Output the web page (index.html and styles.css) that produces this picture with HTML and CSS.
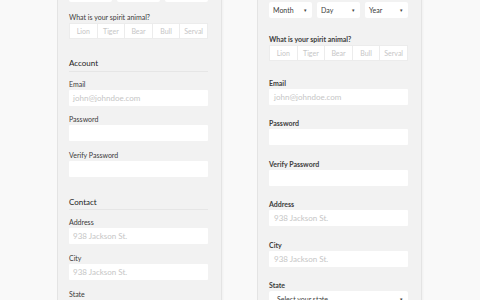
FILE: index.html
```html
<!DOCTYPE html>
<html lang="en">
<head>
  <meta charset="UTF-8" />
  <title>Signup form</title>
  <link rel="stylesheet" href="styles.css">
</head>
<body>

  <div class="screens">

    <!-- Versão compacta -->
    <section class="panel panel-compact">
      <!-- selects de data (cortados no topo) -->
      <div class="date-row">
        <div class="select"></div>
        <div class="select"></div>
        <div class="select"></div>
      </div>

      <div class="field field-animal">
        <label>What is your spirit animal?</label>
        <div class="btn-group">
          <span>Lion</span><span>Tiger</span><span>Bear</span><span>Bull</span><span>Serval</span>
        </div>
      </div>

      <h3 class="section-title">Account</h3>
      <div class="field">
        <label>Email</label>
        <div class="input placeholder">john@johndoe.com</div>
      </div>
      <div class="field">
        <label>Password</label>
        <div class="input"></div>
      </div>
      <div class="field">
        <label>Verify Password</label>
        <div class="input"></div>
      </div>

      <h3 class="section-title">Contact</h3>
      <div class="field">
        <label>Address</label>
        <div class="input placeholder">938 Jackson St.</div>
      </div>
      <div class="field">
        <label>City</label>
        <div class="input placeholder">938 Jackson St.</div>
      </div>
      <div class="field">
        <label>State</label>
        <div class="select"></div>
      </div>
    </section>

    <!-- Versão espaçada -->
    <section class="panel panel-wide">
      <div class="date-row">
        <div class="select">Month <span class="caret">&#9662;</span></div>
        <div class="select">Day <span class="caret">&#9662;</span></div>
        <div class="select">Year <span class="caret">&#9662;</span></div>
      </div>

      <div class="field field-animal">
        <label>What is your spirit animal?</label>
        <div class="btn-group">
          <span>Lion</span><span>Tiger</span><span>Bear</span><span>Bull</span><span>Serval</span>
        </div>
      </div>

      <div class="field">
        <label>Email</label>
        <div class="input placeholder">john@johndoe.com</div>
      </div>
      <div class="field">
        <label>Password</label>
        <div class="input"></div>
      </div>
      <div class="field">
        <label>Verify Password</label>
        <div class="input"></div>
      </div>
      <div class="field">
        <label>Address</label>
        <div class="input placeholder">938 Jackson St.</div>
      </div>
      <div class="field">
        <label>City</label>
        <div class="input placeholder">938 Jackson St.</div>
      </div>
      <div class="field">
        <label>State</label>
        <div class="select">Select your state <span class="caret">&#9662;</span></div>
      </div>
    </section>

  </div>

</body>
</html>
```

FILE: styles.css
```css
:root {
  --color-page: #f9f9f9;
  --color-panel: #f2f2f2;
  --color-border: #e4e4e4;
  --color-text: #3a3a3a;
  --color-muted: #c6c6c6;
  --color-light: #ffffff;
}

* {
  box-sizing: border-box;
  margin: 0;
  padding: 0;
}
body {
  background: var(--color-page);
  font-family: 'Lato', 'Open Sans', sans-serif;
  color: var(--color-text);
  height: 300px;
  overflow: hidden;
}

.screens {
  display: flex;
  gap: 35px;
  padding-left: 57px;
  align-items: flex-start;
}

/* Painel */
.panel {
  width: 165px;
  background: var(--color-panel);
  border: 1px solid var(--color-border);
  box-shadow: 1px 0 2px rgba(0,0,0,0.04);
  padding: 0 13px 40px 11px;
}
.panel-compact {
  margin-top: -15px;
}
.panel-wide {
  margin-top: -1px;
  padding-top: 2px;
}

label {
  display: block;
  font-size: 7px;
  line-height: 10px;
  margin-bottom: 1px;
}

/* Selects falsos */
.date-row {
  display: flex;
  gap: 5px;
}
.date-row .select {
  flex: 1;
}
.select {
  height: 16px;
  background: var(--color-light);
  border-radius: 2px;
  font-size: 7px;
  line-height: 16px;
  padding: 0 5px 0 4px;
  display: flex;
  justify-content: space-between;
  align-items: center;
}
.caret {
  font-size: 5px;
  color: #444;
}

/* Grupo de botões */
.btn-group {
  display: flex;
  height: 16px;
  background: var(--color-light);
  border: 1px solid #ececec;
}
.btn-group span {
  flex: 1;
  text-align: center;
  font-size: 7px;
  line-height: 14px;
  color: var(--color-muted);
  border-left: 1px solid #ececec;
}
.btn-group span:first-child {
  border-left: none;
}

.input {
  height: 16px;
  background: var(--color-light);
  border-radius: 1px;
  font-size: 8px;
  line-height: 16px;
  padding-left: 4px;
}
.placeholder {
  color: var(--color-muted);
}

/* Compacta */
.panel-compact .date-row {
  margin-bottom: 9.5px;
}
.panel-compact .field {
  margin-bottom: 8.8px;
}
.panel-compact .section-title {
  font-size: 8px;
  font-weight: 400;
  color: #222;
  line-height: 12px;
  padding-bottom: 1.5px;
  border-bottom: 1px solid #e6e6e6;
  margin-top: 18.5px;
  margin-bottom: 7px;
}

/* Espaçada */
.panel-wide label {
  font-weight: 700;
  color: #3c3c3c;
}
.panel-wide .date-row {
  margin-bottom: 16px;
}
.panel-wide .field {
  margin-bottom: 13.6px;
}
.panel-wide .field-animal {
  margin-bottom: 16.5px;
}
.panel-wide .input {
  padding-left: 5px;
}
.panel-wide .field .select {
  padding-left: 8px;
}
```
